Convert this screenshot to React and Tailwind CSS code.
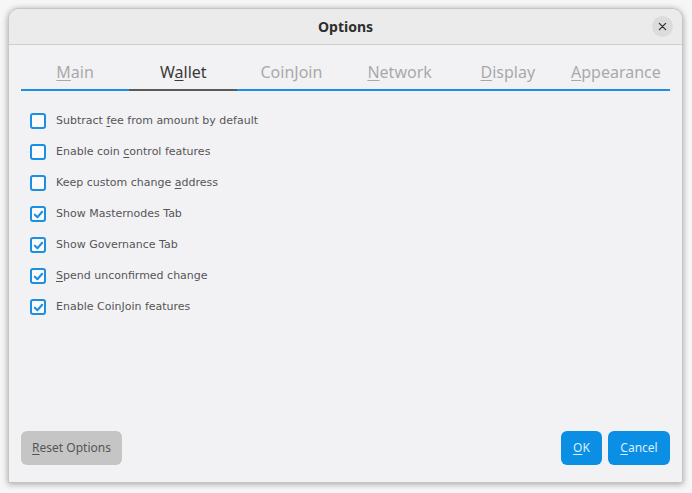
import React, { useState } from 'react';

const TABS = [
  { id: 'main', pre: '', key: 'M', post: 'ain' },
  { id: 'wallet', pre: 'W', key: 'a', post: 'llet' },
  { id: 'coinjoin', pre: 'CoinJoin', key: '', post: '' },
  { id: 'network', pre: '', key: 'N', post: 'etwork' },
  { id: 'display', pre: '', key: 'D', post: 'isplay' },
  { id: 'appearance', pre: '', key: 'A', post: 'ppearance' },
];

const OPTIONS = [
  { id: 'fee', pre: 'Subtract ', key: 'f', post: 'ee from amount by default', checked: false },
  { id: 'coin', pre: 'Enable coin ', key: 'c', post: 'ontrol features', checked: false },
  { id: 'change', pre: 'Keep custom change ', key: 'a', post: 'ddress', checked: false },
  { id: 'mn', pre: 'Show Masternodes Tab', key: '', post: '', checked: true },
  { id: 'gov', pre: 'Show Governance Tab', key: '', post: '', checked: true },
  { id: 'spend', pre: '', key: 'S', post: 'pend unconfirmed change', checked: true },
  { id: 'cj', pre: 'Enable CoinJoin features', key: '', post: '', checked: true },
];

function Mnemonic({ pre, k, post }) {
  return (
    <>
      {pre}
      {k && <span className="underline underline-offset-2">{k}</span>}
      {post}
    </>
  );
}

function Check({ checked, onClick }) {
  return (
    <button
      onClick={onClick}
      className="w-[16px] h-[16px] rounded-[3px] border-2 border-[#1a8fe3] bg-[#fbfbfc] flex items-center justify-center flex-shrink-0"
    >
      {checked && (
        <svg width="11" height="11" viewBox="0 0 12 12" fill="none">
          <path d="M2 6.2L4.8 9L10 3" stroke="#1a8fe3" strokeWidth="2.2" strokeLinecap="round" strokeLinejoin="round" />
        </svg>
      )}
    </button>
  );
}

export default function App() {
  const [tab, setTab] = useState('wallet');
  const [opts, setOpts] = useState(Object.fromEntries(OPTIONS.map((o) => [o.id, o.checked])));

  return (
    <div className="w-[692px] h-[493px] bg-[#f6f6f6] p-[8px] pr-[9px] pb-[10px] font-['Noto_Sans',sans-serif]">
      {/* dialog */}
      <div className="w-full h-full flex flex-col rounded-t-[11px] overflow-hidden bg-[#f2f2f4] shadow-[0_1px_6px_rgba(0,0,0,0.35)] border border-[#c6c6c6]">
        {/* title bar */}
        <div className="relative h-[36px] flex-shrink-0 bg-[#ebebeb] border-b border-[#cfcfcf] flex items-center justify-center">
          <span className="font-bold text-[14px] text-[#2f2f2f] font-['Noto_Sans',sans-serif]">Options</span>
          <button className="absolute right-[9px] top-[7px] w-[21px] h-[21px] rounded-full bg-[#dcdcdc] flex items-center justify-center">
            <svg width="9" height="9" viewBox="0 0 10 10">
              <path d="M1.5 1.5L8.5 8.5M8.5 1.5L1.5 8.5" stroke="#333" strokeWidth="1.4" strokeLinecap="round" />
            </svg>
          </button>
        </div>

        {/* body */}
        <div className="flex-1 flex flex-col px-[12px] pt-[10px] pb-[17px]">
          <div className="flex border-b-2 border-[#1a8fe3]">
            {TABS.map((t) => {
              const active = t.id === tab;
              return (
                <button
                  key={t.id}
                  onClick={() => setTab(t.id)}
                  className={`flex-1 h-[36px] -mb-[2px] flex items-center justify-center text-[16px] border-b-2 ${
                    active ? 'text-[#3a3a3a] border-[#5a5a5a]' : 'text-[#a9a9ab] border-transparent'
                  }`}
                >
                  <span>
                    <Mnemonic pre={t.pre} k={t.key} post={t.post} />
                  </span>
                </button>
              );
            })}
          </div>

          <div className="flex flex-col gap-[15px] pt-[22px] pl-[9px]">
            {OPTIONS.map((o) => (
              <label key={o.id} className="flex items-center gap-[10px] h-[16px] cursor-default">
                <Check checked={opts[o.id]} onClick={() => setOpts((s) => ({ ...s, [o.id]: !s[o.id] }))} />
                <span className="text-[11px] text-[#555557] font-['DejaVu_Sans',sans-serif]">
                  <Mnemonic pre={o.pre} k={o.key} post={o.post} />
                </span>
              </label>
            ))}
          </div>

          <div className="flex-1" />

          {/* buttons */}
          <div className="flex items-center">
            <button className="h-[34px] w-[101px] rounded-[6px] bg-[#c5c5c5] text-[12px] text-[#555555]">
              <Mnemonic pre="" k="R" post="eset Options" />
            </button>
            <div className="flex-1" />
            <button className="h-[34px] w-[41px] rounded-[6px] bg-[#0a8fe4] text-[12px] text-[#dceeff]">
              <Mnemonic pre="" k="O" post="K" />
            </button>
            <button className="ml-[6px] h-[34px] w-[62px] rounded-[6px] bg-[#0a8fe4] text-[12px] text-[#dceeff]">
              <Mnemonic pre="" k="C" post="ancel" />
            </button>
          </div>
        </div>
      </div>
    </div>
  );
}
